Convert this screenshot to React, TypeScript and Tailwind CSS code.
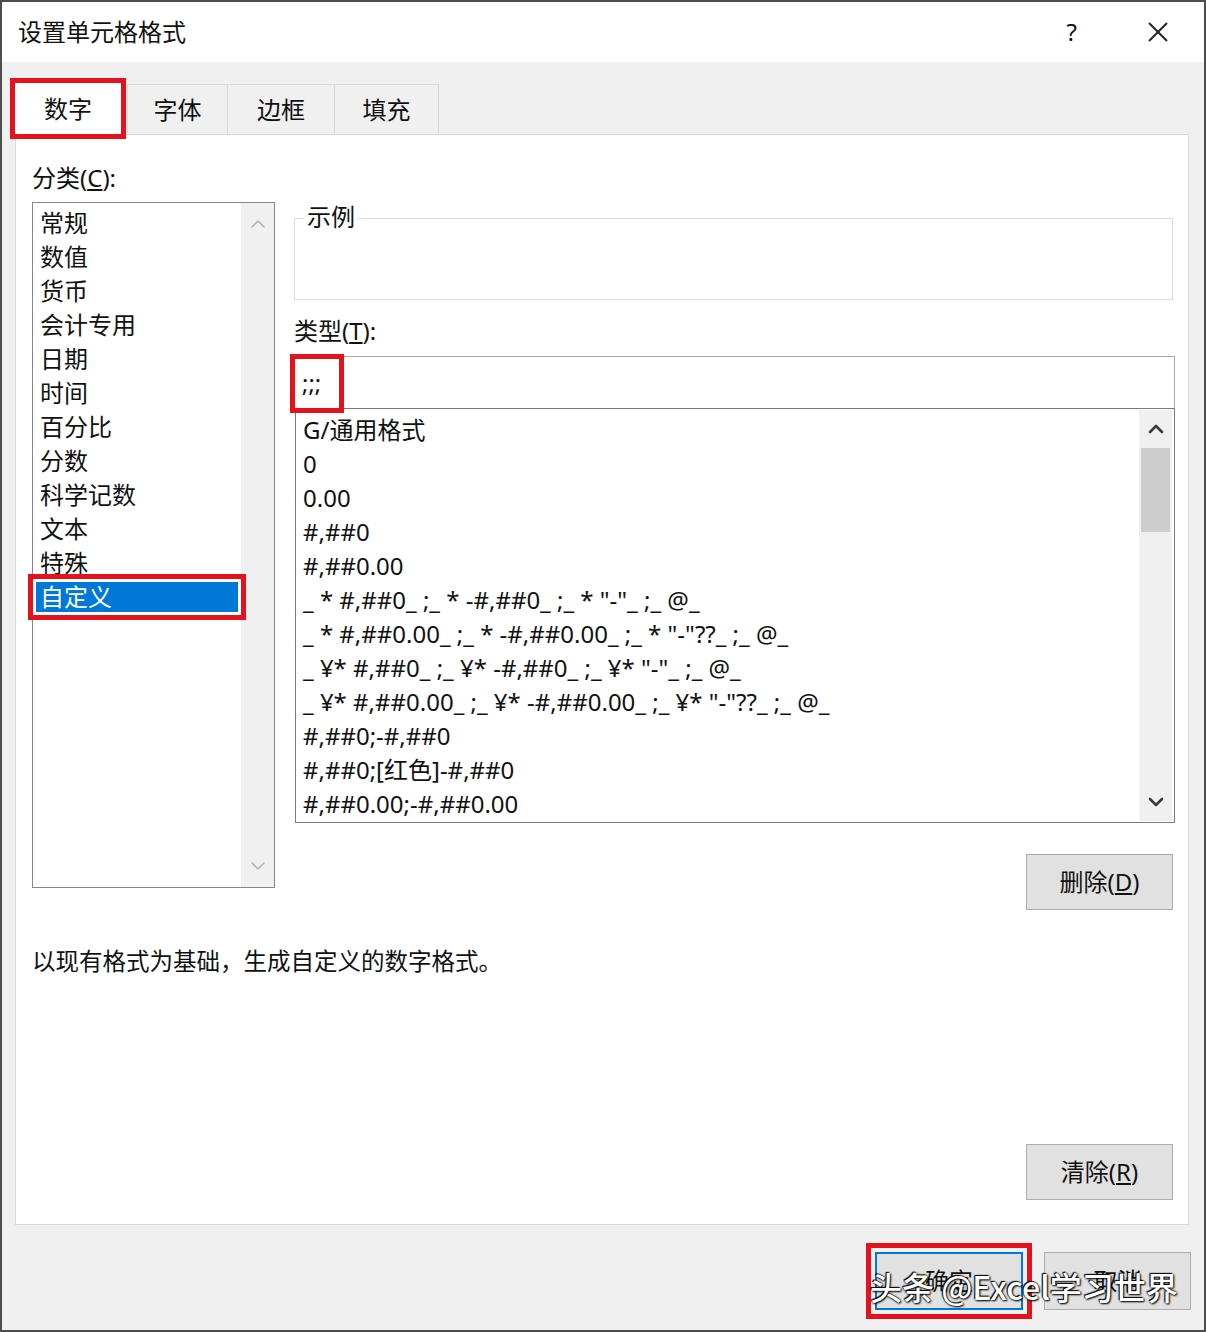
const categories = [
  "常规",
  "数值",
  "货币",
  "会计专用",
  "日期",
  "时间",
  "百分比",
  "分数",
  "科学记数",
  "文本",
  "特殊",
  "自定义",
];

const types = [
  "G/通用格式",
  "0",
  "0.00",
  "#,##0",
  "#,##0.00",
  '_ * #,##0_ ;_ * -#,##0_ ;_ * "-"_ ;_ @_',
  '_ * #,##0.00_ ;_ * -#,##0.00_ ;_ * "-"??_ ;_ @_',
  '_ ¥* #,##0_ ;_ ¥* -#,##0_ ;_ ¥* "-"_ ;_ @_',
  '_ ¥* #,##0.00_ ;_ ¥* -#,##0.00_ ;_ ¥* "-"??_ ;_ @_',
  "#,##0;-#,##0",
  "#,##0;[红色]-#,##0",
  "#,##0.00;-#,##0.00",
];

const Chevron = ({ up, dark }: { up: boolean; dark: boolean }) => (
  <svg width="16" height="10" viewBox="0 0 16 10" fill="none">
    <polyline
      points={up ? "2,8 8,2 14,8" : "2,2 8,8 14,2"}
      stroke={dark ? "#3a3a3a" : "#b4b4b4"}
      strokeWidth={dark ? 2.6 : 1.6}
      strokeLinejoin="round"
      strokeLinecap="round"
    />
  </svg>
);

const Tab = ({ label }: { label: string }) => (
  <div className="h-[50px] flex items-center justify-center bg-[#f0f0f0] border border-b-0 border-[#d9d9d9] text-[24px] text-[#111]">
    {label}
  </div>
);

const Btn = ({ children }: { children: React.ReactNode }) => (
  <div className="w-[147px] h-[56px] flex items-center justify-center bg-[#e1e1e1] border border-[#adadad] text-[24px] text-[#111]">
    {children}
  </div>
);

export default function App() {
  return (
    <div className="w-[1206px] h-[1332px] box-border border-2 border-[#4d4d4d] bg-[#f0f0f0] flex flex-col relative font-['Noto_Sans','Noto_Sans_CJK_SC',sans-serif] text-[#111] overflow-hidden">
      {/* title bar */}
      <div className="h-[60px] bg-white flex items-center pl-[16px] pr-[35px] shrink-0">
        <div className="text-[24px] leading-none">设置单元格格式</div>
        <div className="ml-auto text-[24px] leading-none mr-[70px]">?</div>
        <svg width="22" height="22" viewBox="0 0 22 22">
          <line x1="2" y1="2" x2="20" y2="20" stroke="#222" strokeWidth="2" />
          <line x1="20" y1="2" x2="2" y2="20" stroke="#222" strokeWidth="2" />
        </svg>
      </div>

      {/* body */}
      <div className="flex-1 pl-[13px] pr-[15px] flex flex-col">
        {/* tabs */}
        <div className="flex items-end mt-[20px] h-[52px] relative z-10">
          <div className="w-[108px] h-[53px] -ml-px -mb-px bg-white flex items-center justify-center text-[24px] outline-[5px] outline-[#e3121c] -outline-offset-1">
            数字
          </div>
          <div className="flex ml-[5px]">
            <div className="w-[101px]">
              <Tab label="字体" />
            </div>
            <div className="w-[108px] -ml-px">
              <Tab label="边框" />
            </div>
            <div className="w-[105px] -ml-px">
              <Tab label="填充" />
            </div>
          </div>
        </div>

        {/* panel */}
        <div className="h-[1091px] bg-white border border-[#d9d9d9] pl-[16px] pr-[13px] pt-[26px] flex flex-col">
          <div className="flex gap-[19px]">
            {/* category column */}
            <div className="w-[243px] shrink-0">
              <div className="h-[34px] leading-[34px] text-[24px] mb-[7px]">
                分类(<span className="underline underline-offset-2">C</span>):
              </div>
              <div className="h-[686px] border border-[#828790] flex">
                <div className="flex-1 pt-[3px] relative z-10">
                  {categories.map((c) =>
                    c === "自定义" ? (
                      <div key={c} className="h-[34px] py-[2px] px-[3px]">
                        <div className="h-[30px] bg-[#0078d7] text-white pl-[4px] text-[24px] leading-[30px] outline-[5px] outline-[#e3121c] outline-offset-[3px]">
                          {c}
                        </div>
                      </div>
                    ) : (
                      <div key={c} className="h-[34px] leading-[34px] pl-[7px] text-[24px]">
                        {c}
                      </div>
                    )
                  )}
                </div>
                <div className="w-[33px] bg-[#f0f0f0] flex flex-col items-center justify-between py-[16px]">
                  <Chevron up dark={false} />
                  <Chevron up={false} dark={false} />
                </div>
              </div>
            </div>

            {/* type column */}
            <div className="flex-1 flex flex-col">
              <div className="mt-[57px] h-[82px] border border-[#dcdcdc] relative mr-[2px]">
                <div className="absolute left-[9px] -top-[17px] bg-white px-[3px] text-[24px] leading-[30px]">
                  示例
                </div>
              </div>
              <div className="mt-[16px] h-[30px] leading-[30px] text-[24px]">
                类型(<span className="underline underline-offset-2">T</span>):
              </div>
              <div className="mt-[10px] h-[52px] border border-b-0 border-[#a9a9a9] relative flex items-center pl-[7px] text-[24px]">
                ;;;
                <div className="absolute -left-[5px] -top-[3px] w-[54px] h-[59px] border-[5px] border-[#e3121c]" />
              </div>
              <div className="h-[415px] border border-[#7a7a7a] flex ml-px">
                <div className="flex-1 pt-[4px] pl-[7px] overflow-hidden">
                  {types.map((t) => (
                    <div key={t} className="h-[34px] leading-[34px] text-[24px] whitespace-pre">
                      {t}
                    </div>
                  ))}
                </div>
                <div className="w-[33px] bg-[#f0f0f0] mr-[2px] my-[1px] flex flex-col items-center">
                  <div className="h-[38px] flex items-center">
                    <Chevron up dark />
                  </div>
                  <div className="w-[29px] h-[84px] bg-[#cdcdcd]" />
                  <div className="mt-auto h-[38px] flex items-center">
                    <Chevron up={false} dark />
                  </div>
                </div>
              </div>
              <div className="mt-[31px] self-end mr-[2px]">
                <Btn>
                  删除(<span className="underline underline-offset-2">D</span>)
                </Btn>
              </div>
            </div>
          </div>

          <div className="mt-[36px] h-[30px] leading-[30px] text-[23.5px]">
            以现有格式为基础，生成自定义的数字格式。
          </div>

          <div className="mt-[168px] self-end mr-[2px]">
            <Btn>
              清除(<span className="underline underline-offset-2">R</span>)
            </Btn>
          </div>
        </div>

        {/* dialog buttons */}
        <div className="flex justify-end gap-[21px] mt-[27px] -mr-[2px]">
          <div className="w-[148px] h-[58px] flex items-center justify-center bg-[#e1e1e1] border-2 border-[#0078d7] text-[24px] outline-[5px] outline-[#e3121c] outline-offset-[4px]">
            确定
          </div>
          <div className="w-[147px] h-[58px] flex items-center justify-center bg-[#e1e1e1] border border-[#adadad] text-[24px]">
            取消
          </div>
        </div>
      </div>

      {/* watermark */}
      <div className="absolute left-[868px] top-[1262px] font-['Noto_Sans_CJK_SC',sans-serif] font-medium text-[32px] leading-[44px] text-white whitespace-pre [text-shadow:0_0_2px_#000,1px_1px_2px_#000,-1px_-1px_1px_#000]">
        头条 @Excel学习世界
      </div>
    </div>
  );
}
